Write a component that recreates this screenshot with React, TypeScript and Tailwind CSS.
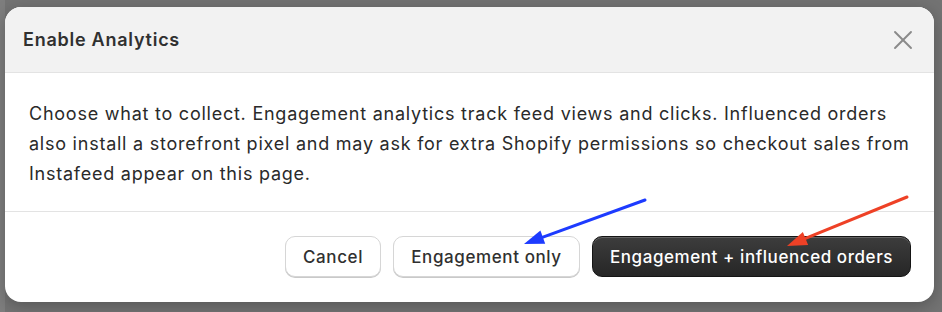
import { X } from 'lucide-react'

function Arrow({ x1, y1, x2, y2, color }: { x1: number; y1: number; x2: number; y2: number; color: string }) {
    // arrow head drawn as a filled triangle pointing at (x2, y2)
    const dx = x2 - x1
    const dy = y2 - y1
    const len = Math.sqrt(dx * dx + dy * dy)
    const ux = dx / len
    const uy = dy / len
    const headLen = 20
    const headW = 7
    const bx = x2 - ux * headLen
    const by = y2 - uy * headLen
    const p1 = `${bx - uy * headW},${by + ux * headW}`
    const p2 = `${bx + uy * headW},${by - ux * headW}`
    return (
        <g>
            <line x1={x1} y1={y1} x2={bx + ux * 2} y2={by + uy * 2} stroke={color} strokeWidth={3} strokeLinecap="round" />
            <polygon points={`${x2},${y2} ${p1} ${p2}`} fill={color} />
        </g>
    )
}

export default function App() {
    return (
        <div
            className="relative w-[942px] h-[312px] overflow-hidden bg-[#737373]"
            style={{ fontFamily: 'Inter, "Noto Sans", sans-serif' }}
        >
            {/* faint page behind the overlay */}
            <div className="flex h-full">
                <div className="w-[5px] bg-[#7e7e7e]"></div>
                <div className="flex-1"></div>
            </div>

            {/* modal */}
            <div className="absolute left-[5px] top-[7px] w-[929px] h-[295px] bg-white rounded-[16px] overflow-hidden flex flex-col shadow-[0_4px_16px_rgba(0,0,0,0.25)]">
                <div className="h-[66px] bg-[#f2f2f2] border-b border-[#e3e3e3] flex items-center justify-between pl-[18px] pr-[15px]">
                    <h2 className="text-[18px] font-semibold text-[#303030] tracking-[0.75px]">Enable Analytics</h2>
                    <X className="w-[32px] h-[32px] text-[#8a8a8a]" strokeWidth={1.4} />
                </div>

                <div className="h-[139px] border-b border-[#e3e3e3] pl-[24px] pr-[10px] pt-[26px]">
                    <p className="text-[18px] leading-[30px] text-[#2a2a2a] tracking-[0.76px] whitespace-nowrap">
                        Choose what to collect. Engagement analytics track feed views and clicks. Influenced orders
                        <br />
                        also install a storefront pixel and may ask for extra Shopify permissions so checkout sales from
                        <br />
                        Instafeed appear on this page.
                    </p>
                </div>

                <div className="flex-1 flex items-center justify-end gap-[12px] pr-[23px] pb-[1px]">
                    <button className="h-[41px] w-[96px] pt-[2px] rounded-[10px] bg-white border border-[#d6d6d6] shadow-[0_1px_0_#c9c9c9] text-[17px] font-medium text-[#303030] tracking-[0.6px]">
                        Cancel
                    </button>
                    <button className="h-[41px] w-[187px] pt-[2px] rounded-[10px] bg-white border border-[#d6d6d6] shadow-[0_1px_0_#c9c9c9] text-[17px] font-medium text-[#303030] tracking-[0.6px]">
                        Engagement only
                    </button>
                    <button className="h-[41px] w-[319px] pt-[2px] rounded-[10px] bg-gradient-to-b from-[#3d3d3d] to-[#262626] border border-[#151515] shadow-[inset_0_1px_0_rgba(255,255,255,0.2)] text-[17px] font-medium text-white tracking-[0.57px]">
                        Engagement + influenced orders
                    </button>
                </div>
            </div>

            {/* annotation arrows */}
            <svg className="absolute inset-0 pointer-events-none" width={942} height={312}>
                <Arrow x1={645} y1={200} x2={524} y2={244} color="#1d3bff" />
                <Arrow x1={907} y1={197} x2={787} y2={246} color="#ee4126" />
            </svg>
        </div>
    )
}
